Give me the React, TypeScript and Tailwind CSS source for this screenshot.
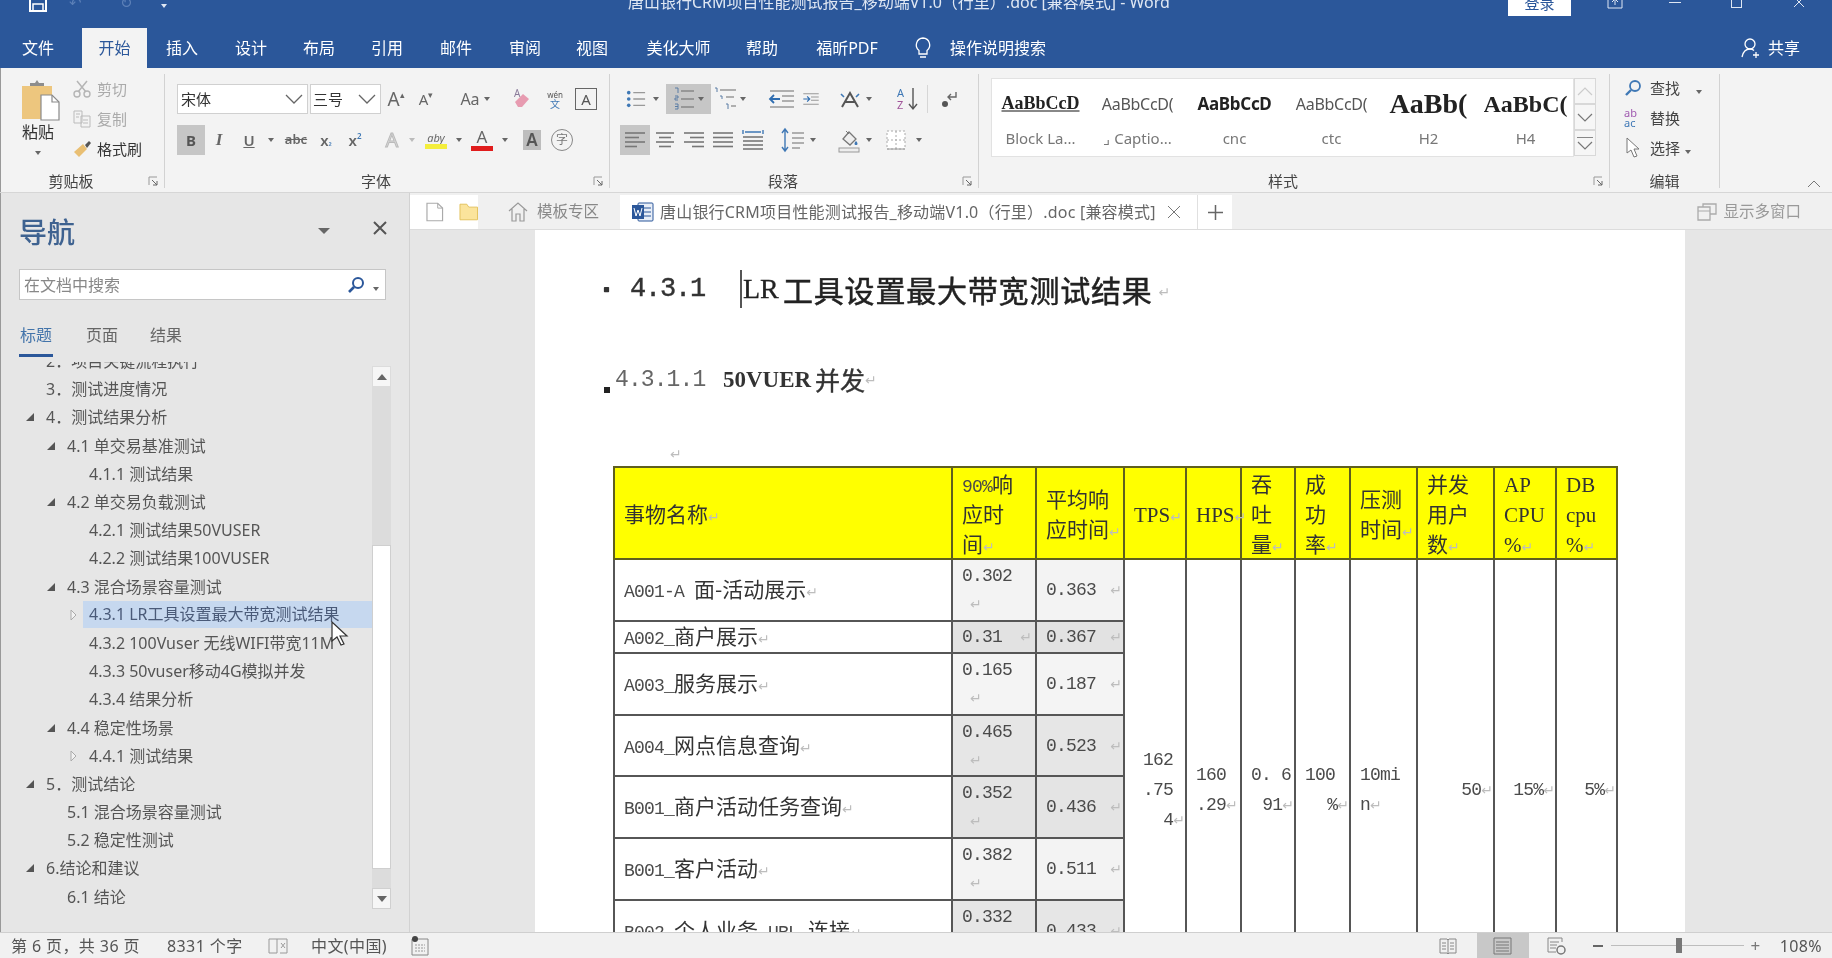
import React from "react";

const Caret = ({ c = "border-t-[#666]" }: { c?: string }) => (
  <span className={`inline-block w-0 h-0 border-x-[3px] border-x-transparent border-t-[4px] ${c}`} />
);
const Sep = () => <span className="w-px h-[28px] bg-[#d6d6d6] shrink-0" />;
const M = () => <span className="font-['DejaVu_Sans'] text-[14px] text-[#bdbdbd] font-normal tracking-normal">↵</span>;
const L = ({ children }: { children: React.ReactNode }) => (
  <span className="font-['Liberation_Mono'] text-[18px] tracking-[-0.8px] text-[#4a4a4a]">{children}</span>
);
const HL = ({ children }: { children: React.ReactNode }) => (
  <span className="font-['Liberation_Serif'] text-[21px] text-[#333]">{children}</span>
);
const Launcher = () => (
  <svg width="11" height="11" viewBox="0 0 11 11" className="shrink-0">
    <path d="M1 9V1h8" fill="none" stroke="#999" />
    <path d="M4 4l5 5M9 5v4H5" fill="none" stroke="#666" />
  </svg>
);
const Group = ({ w, label, launcher = true, children }: { w: string; label: string; launcher?: boolean; children: React.ReactNode }) => (
  <div className={`${w} shrink-0 h-full flex flex-col border-r border-[#d2d2d2]`}>
    <div className="flex-1 min-h-0">{children}</div>
    <div className="h-[14px] flex items-center">
      <div className="flex-1 text-center text-[15px] leading-[14px] text-[#444]">{label}</div>
      {launcher && <div className="w-[22px] flex justify-center"><Launcher /></div>}
    </div>
  </div>
);
const Lines = ({ kind }: { kind: "l" | "c" | "r" | "j" | "d" }) => {
  const rows: Record<string, number[][]> = {
    l: [[2, 22], [2, 16], [2, 22], [2, 14]],
    c: [[3, 21], [6, 18], [3, 21], [6, 18]],
    r: [[2, 22], [8, 22], [2, 22], [10, 22]],
    j: [[2, 22], [2, 22], [2, 22], [2, 22]],
    d: [[2, 22], [2, 22], [2, 22], [2, 22]],
  };
  return (
    <svg width="24" height="22" viewBox="0 0 24 22">
      {kind === "d" && <path d="M2 1v4M22 1v4M4 3h16" stroke="#3f78b5" strokeWidth="1.4" fill="none" />}
      {rows[kind].map((r, i) => (
        <path key={i} d={`M${r[0]} ${(kind === "d" ? 8 : 4) + i * (kind === "d" ? 4 : 4.5)}H${r[1]}`} stroke="#777" strokeWidth="1.6" />
      ))}
    </svg>
  );
};
const Indent = ({ flip }: { flip?: boolean }) => (
  <svg width="28" height="20" viewBox="0 0 28 20">
    <path d="M2 2h24M14 7h12M14 12h12M2 18h24" stroke="#999" strokeWidth="1.6" />
    {flip ? <path d="M2 10h9M8 6l4 4-4 4" stroke="#2f6db0" strokeWidth="1.8" fill="none" /> : <path d="M12 10H3M6 6l-4 4 4 4" stroke="#2f6db0" strokeWidth="1.8" fill="none" />}
  </svg>
);
const Bullets = () => (
  <svg width="22" height="22" viewBox="0 0 22 22">
    <circle cx="3" cy="4" r="2" fill="#3f78b5" /><circle cx="3" cy="11" r="2" fill="#3f78b5" /><circle cx="3" cy="18" r="2" fill="#3f78b5" />
    <path d="M8 4h13M8 11h13M8 18h13" stroke="#999" strokeWidth="1.6" />
  </svg>
);
const Numbered = () => (
  <svg width="22" height="24" viewBox="0 0 22 24">
    <path d="M2 1h3v5M2 9h3v2H2v2h3M2 17h3v5H2M2 19.5h3" stroke="#5a7da5" fill="none" />
    <path d="M8 4h13M8 12h13M8 20h13" stroke="#888" strokeWidth="1.6" />
  </svg>
);
const Multi = () => (
  <svg width="24" height="24" viewBox="0 0 24 24">
    <path d="M1 1h2v4M6 9h2v3M12 17h2v5" stroke="#5a7da5" fill="none" />
    <path d="M6 3h16M12 10h8M17 19h5" stroke="#999" strokeWidth="1.5" />
  </svg>
);

function ClipboardGroup() {
  return (
    <Group w="w-[165px]" label="剪贴板">
      <div className="flex h-full">
        <div className="w-[73px] pl-[20px] flex flex-col">
          <svg width="42" height="42" viewBox="0 0 42 42" className="mt-[6px]">
            <rect x="2" y="6" width="30" height="33" fill="#edc67e" />
            <path d="M10 6V3h5l2-3 2 3h5v3z" fill="#8d8d8d" />
            <path d="M21 15h11l7 7v18H21z" fill="#fff" stroke="#8a8a8a" strokeWidth="1.2" />
            <path d="M32 15v7h7" fill="none" stroke="#8a8a8a" strokeWidth="1.2" />
          </svg>
          <div className="text-[16px] leading-[20px] text-[#333] w-[36px] text-center whitespace-nowrap">粘贴</div>
          <div className="mt-[9px] w-[36px] flex justify-center"><Caret /></div>
        </div>
        <div className="flex flex-col text-[15px]">
          {[["剪切", "#aaa"], ["复制", "#aaa"], ["格式刷", "#333"]].map(([t, c], i) => (
            <div key={t} className="h-[30px] flex items-center">
              <span className="w-[24px] flex justify-start">
                {i === 0 && (
                  <svg width="18" height="18" viewBox="0 0 18 18"><path d="M4 1l9 11M14 1L5 12" stroke="#b5b5b5" strokeWidth="1.5" /><circle cx="4" cy="14" r="3" fill="none" stroke="#b5b5b5" strokeWidth="1.4" /><circle cx="14" cy="14" r="3" fill="none" stroke="#b5b5b5" strokeWidth="1.4" /></svg>
                )}
                {i === 1 && (
                  <svg width="19" height="18" viewBox="0 0 19 18"><path d="M1 1h8v12H1zM8 6h9v11H8z" fill="#f3f3f3" stroke="#bbb" /><path d="M3 4h4M3 7h3M10 10h5M10 13h5" stroke="#bbb" /></svg>
                )}
                {i === 2 && (
                  <svg width="20" height="18" viewBox="0 0 20 18"><path d="M1 12l9-8 4 5-8 8z" fill="#e9bf73" /><path d="M12 5l4-4 2 2-4 5z" fill="#555" /></svg>
                )}
              </span>
              <span style={{ color: c }}>{t}</span>
            </div>
          ))}
        </div>
      </div>
    </Group>
  );
}

function FontGroup() {
  const S = "flex items-center justify-center shrink-0";
  return (
    <Group w="w-[445px]" label="字体">
      <div className="pt-[10px] pl-[12px]">
        <div className="flex items-center h-[30px]">
          <div className="w-[131px] h-[30px] bg-white border border-[#d0d0d0] flex items-center justify-between pl-[3px] pr-[4px] text-[15px] text-[#333]">
            <span>宋体</span>
            <svg width="18" height="10" viewBox="0 0 18 10"><path d="M1 1l8 8 8-8" fill="none" stroke="#666" strokeWidth="1.3" /></svg>
          </div>
          <div className="w-[71px] ml-[2px] h-[30px] bg-white border border-[#d0d0d0] flex items-center justify-between pl-[2px] pr-[4px] text-[15px] text-[#333]">
            <span>三号</span>
            <svg width="18" height="10" viewBox="0 0 18 10"><path d="M1 1l8 8 8-8" fill="none" stroke="#666" strokeWidth="1.3" /></svg>
          </div>
          <span className={`${S} w-[30px] text-[#666] text-[19px]`}>A<sup className="text-[9px]">▴</sup></span>
          <span className={`${S} w-[30px] text-[#666] text-[15px]`}>A<sup className="text-[9px]">▾</sup></span>
          <span className="ml-[7px]"><Sep /></span>
          <span className={`${S} w-[54px] gap-[4px] text-[#666] text-[16px]`}>Aa <Caret /></span>
          <span className="-ml-px"><Sep /></span>
          <span className={`${S} w-[42px]`}>
            <svg width="20" height="22" viewBox="0 0 20 22"><path d="M3 14l8-8 6 5-7 8H6z" fill="#e79bb0" /><text x="2" y="9" fontSize="10" fill="#8a7a9a">A</text></svg>
          </span>
          <span className={`${S} w-[24px] flex-col text-[10px] leading-[10px] text-[#3f78b5]`}><span className="text-[8px] leading-[9px] text-[#555]">wén</span>文</span>
          <span className={`${S} w-[22px] h-[22px] ml-[8px] border border-[#666] text-[#555] text-[15px]`}>A</span>
        </div>
        <div className="flex items-center h-[30px] mt-[11px]">
          <span className={`${S} w-[28px] h-[30px] bg-[#c6c6c6] text-[15px] font-bold text-[#555]`}>B</span>
          <span className={`${S} w-[28px] italic font-['Liberation_Serif'] font-bold text-[17px] text-[#666]`}>I</span>
          <span className={`${S} w-[32px] underline text-[15px] font-semibold text-[#666]`}>U</span>
          <span className={`${S} w-[12px]`}><Caret /></span>
          <span className={`${S} w-[38px] line-through text-[13px] font-semibold text-[#666]`}>abc</span>
          <span className={`${S} w-[22px] text-[15px] font-semibold text-[#666]`}>x<sub className="text-[8px] text-[#3f78b5]">₂</sub></span>
          <span className={`${S} w-[36px] text-[15px] font-semibold text-[#666]`}>x<sup className="text-[8px] text-[#3f78b5]">2</sup></span>
          <span className="ml-[3px]"><Sep /></span>
          <span className={`${S} w-[32px] text-[20px] text-[#dcdcdc] [-webkit-text-stroke:1px_#bbb]`}>A</span>
          <span className={`${S} w-[8px]`}><Caret c="border-t-[#bbb]" /></span>
          <span className={`${S} w-[40px] flex-col`}>
            <span className="text-[11px] leading-[13px] italic text-[#666]">aby</span>
            <span className="w-[22px] h-[5px] bg-[#f4ee3c]" />
          </span>
          <span className={`${S} w-[6px]`}><Caret /></span>
          <span className={`${S} w-[40px] flex-col`}>
            <span className="text-[17px] leading-[15px] text-[#666]">A</span>
            <span className="w-[22px] h-[5px] mt-[2px] bg-[#e01c1c]" />
          </span>
          <span className={`${S} w-[6px]`}><Caret /></span>
          <span className={`${S} w-[18px] h-[20px] ml-[15px] bg-[#bdbdbd] text-[17px] font-semibold text-[#555]`}>A</span>
          <span className={`${S} w-[22px] h-[22px] ml-[10px] rounded-full border border-[#888] text-[12px] text-[#777]`}>字</span>
        </div>
      </div>
    </Group>
  );
}

function ParaGroup() {
  const S = "flex items-center justify-center shrink-0";
  return (
    <Group w="w-[369px]" label="段落">
      <div className="pt-[10px]">
        <div className="flex items-center h-[30px] pl-[16px]">
          <span className={`${S} w-[20px]`}><Bullets /></span>
          <span className={`${S} w-[20px]`}><Caret /></span>
          <span className={`${S} w-[45px] h-[30px] bg-[#c6c6c6] gap-[3px]`}><Numbered /><Caret /></span>
          <span className={`${S} w-[38px] gap-[2px]`}><Multi /><Caret /></span>
          <span className="ml-[13px]"><Sep /></span>
          <span className={`${S} w-[40px]`}><Indent /></span>
          <span className={`${S} w-[18px]`}><Indent flip /></span>
          <span className="ml-[12px]"><Sep /></span>
          <span className={`${S} w-[46px] gap-[4px]`}>
            <svg width="24" height="20" viewBox="0 0 24 20"><path d="M4 18L12 4l8 14M7 13h10" stroke="#555" strokeWidth="2" fill="none" /><path d="M3 5l3 3M21 5l-3 3" stroke="#3f78b5" strokeWidth="1.6" /></svg>
            <Caret />
          </span>
          <span className="ml-[11px]"><Sep /></span>
          <span className={`${S} w-[38px]`}>
            <svg width="26" height="26" viewBox="0 0 26 26"><text x="2" y="11" fontSize="11" fill="#3f78b5">A</text><text x="2" y="23" fontSize="11" fill="#a0559a">Z</text><path d="M18 2v20M14 18l4 5 4-5" stroke="#555" strokeWidth="1.4" fill="none" /></svg>
          </span>
          <Sep />
          <span className={`${S} w-[42px]`}>
            <svg width="18" height="20" viewBox="0 0 18 20"><path d="M16 3v5H8M11 5L8 8l3 3" stroke="#666" strokeWidth="1.4" fill="none" /><circle cx="5" cy="15" r="3" fill="#555" /></svg>
          </span>
        </div>
        <div className="flex items-center h-[30px] mt-[11px] pl-[10px]">
          <span className={`${S} w-[30px] h-[30px] bg-[#c6c6c6]`}><Lines kind="l" /></span>
          <span className={`${S} w-[30px]`}><Lines kind="c" /></span>
          <span className={`${S} w-[28px]`}><Lines kind="r" /></span>
          <span className={`${S} w-[30px]`}><Lines kind="j" /></span>
          <span className={`${S} w-[30px]`}><Lines kind="d" /></span>
          <span className="ml-[5px]"><Sep /></span>
          <span className={`${S} w-[50px] gap-[5px]`}>
            <svg width="24" height="26" viewBox="0 0 24 26"><path d="M4 2v22M1 6l3-4 3 4M1 20l3 4 3-4" stroke="#3f78b5" strokeWidth="1.4" fill="none" /><path d="M11 6h12M11 11h12M11 16h12M11 21h8" stroke="#999" strokeWidth="1.6" /></svg>
            <Caret />
          </span>
          <span className="ml-[7px]"><Sep /></span>
          <span className={`${S} w-[48px] gap-[5px]`}>
            <svg width="24" height="26" viewBox="0 0 24 26"><path d="M6 12l6-7 7 7-6 6z" fill="#eee" stroke="#777" strokeWidth="1.3" /><path d="M9 4l3 3" stroke="#777" /><path d="M19 14c2 2 2 4 0 4s-2-2 0-4z" fill="#3f78b5" /><rect x="2" y="21" width="20" height="4" fill="#eee" stroke="#999" /></svg>
            <Caret />
          </span>
          <span className={`${S} w-[50px] gap-[10px] pl-[2px]`}>
            <svg width="20" height="20" viewBox="0 0 20 20"><path d="M1 1h18v18H1zM10 1v18M1 10h18" fill="#fff" stroke="#aaa" strokeDasharray="2 2" /><path d="M1 19h18" stroke="#999" /></svg>
            <Caret />
          </span>
        </div>
      </div>
    </Group>
  );
}

function StylesGroup() {
  const cells = [
    ["AaBbCcD", "Block La...", "font-['Liberation_Serif'] font-bold underline decoration-2 decoration-[#888] text-[18px] text-[#222]"],
    ["AaBbCcD(", "⌟ Captio...", "font-['Noto_Sans'] text-[16px] text-[#555] tracking-[-0.3px]"],
    ["AaBbCcD", "cnc", "font-['Noto_Sans'] font-bold text-[17px] text-[#222] tracking-[-0.3px]"],
    ["AaBbCcD(", "ctc", "font-['Noto_Sans'] text-[16px] text-[#555] tracking-[-0.3px]"],
    ["AaBb(", "H2", "font-['Liberation_Serif'] font-bold text-[28px] text-[#222]"],
    ["AaBbC(", "H4", "font-['Liberation_Serif'] font-bold text-[24px] text-[#222]"],
  ];
  return (
    <Group w="w-[631px]" label="样式">
      <div className="pt-[4px] pl-[12px] flex">
        <div className="w-[583px] h-[79px] bg-white border border-[#e2e2e2] flex">
          {cells.map(([a, b, c], i) => (
            <div key={i} className="w-[97px] shrink-0 flex flex-col items-center overflow-hidden">
              <div className={`h-[49px] w-[84px] flex items-center justify-center overflow-hidden whitespace-nowrap ${c}`}>{a}</div>
              <div className="text-[15px] leading-[20px] text-[#777] whitespace-nowrap">{b}</div>
            </div>
          ))}
        </div>
        <div className="w-[22px] h-[79px] flex flex-col">
          {[0, 1, 2].map((i) => (
            <div key={i} className="h-[26px] border border-[#d8d8d8] flex flex-col items-center justify-center bg-[#f6f6f6]">
              {i === 2 && <span className="w-[16px] h-px bg-[#888] mb-[3px]" />}
              <svg width="16" height="9" viewBox="0 0 16 9"><path d={i === 0 ? "M1 8l7-7 7 7" : "M1 1l7 7 7-7"} fill="none" stroke={i === 0 ? "#ccc" : "#777"} strokeWidth="1.2" /></svg>
            </div>
          ))}
        </div>
      </div>
    </Group>
  );
}

function EditGroup() {
  return (
    <Group w="w-[110px]" label="编辑" launcher={false}>
      <div className="flex flex-col pl-[14px] text-[15px] text-[#444] -mt-[1px]">
        <div className="h-[30px] flex items-center gap-[2px]">
          <svg width="18" height="18" viewBox="0 0 18 18"><circle cx="11" cy="7" r="5" fill="none" stroke="#3f78b5" strokeWidth="1.8" /><path d="M7 11l-5 5" stroke="#3f78b5" strokeWidth="2.4" /></svg>
          <span className="ml-[6px] w-[34px]">查找</span><span className="ml-[10px]"><Caret /></span>
        </div>
        <div className="h-[30px] flex items-center gap-[2px]">
          <span className="w-[20px] text-[11px] leading-[10px] text-[#a05ab0]">ab<br /><span className="text-[#3f78b5]">ac</span></span>
          <span className="ml-[4px]">替换</span>
        </div>
        <div className="h-[30px] flex items-center gap-[2px]">
          <svg width="18" height="22" viewBox="0 0 18 22"><path d="M3 1v15l4-3 3 7 3-1-3-7h5z" fill="#fff" stroke="#777" /></svg>
          <span className="ml-[6px]">选择</span><span className="ml-[3px]"><Caret /></span>
        </div>
      </div>
    </Group>
  );
}

const tabs: [string, string][] = [
  ["插入", "w-[70px]"], ["设计", "w-[68px]"], ["布局", "w-[68px]"], ["引用", "w-[68px]"], ["邮件", "w-[70px]"],
  ["审阅", "w-[68px]"], ["视图", "w-[66px]"], ["美化大师", "w-[107px]"], ["帮助", "w-[60px]"], ["福昕PDF", "w-[110px]"],
];

function Header() {
  return (
    <div className="h-[68px] bg-[#2b579a] overflow-hidden shrink-0 text-white">
      <div className="h-[38px] -mt-[10px] flex items-start">
        <div className="w-[628px] h-[24px] flex items-center shrink-0">
          <svg width="18" height="20" viewBox="0 0 18 20" className="ml-[29px]"><path d="M1 1h13l3 3v15H1z" fill="none" stroke="#fff" strokeWidth="2" /><path d="M4 1h9v6H4zM4 12h10v7H4z" fill="none" stroke="#fff" strokeWidth="1.5" /></svg>
          <span className="ml-[22px] text-[#5b7fb7] text-[15px]">↶</span>
          <span className="ml-[38px] text-[#5b7fb7] text-[15px]">↻</span>
          <span className="ml-[28px]"><Caret c="border-t-[#dfe7f3]" /></span>
        </div>
        <div className="w-[880px] h-[24px] text-[16px] leading-[24px] whitespace-nowrap text-[#dfe7f3] shrink-0">唐山银行CRM项目性能测试报告_移动端V1.0（行里）.doc [兼容模式] - Word</div>
        <div className="w-[63px] h-[26px] bg-white text-[#2b579a] text-[15px] flex items-center justify-center shrink-0">登录</div>
        <div className="flex h-[24px] items-center">
          <svg width="16" height="14" viewBox="0 0 16 14" className="ml-[36px]"><path d="M1 1h14v12H1zM8 10V4M5 7l3-3 3 3" fill="none" stroke="#dfe7f3" /></svg>
          <span className="ml-[46px] w-[12px] h-px bg-[#dfe7f3]" />
          <span className="ml-[50px] w-[11px] h-[11px] border border-[#dfe7f3]" />
          <svg width="12" height="12" viewBox="0 0 12 12" className="ml-[51px]"><path d="M1 1l10 10M11 1L1 11" stroke="#dfe7f3" /></svg>
        </div>
      </div>
      <div className="h-[40px] flex items-center text-[16px]">
        <div className="w-[82px] text-center pr-[6px]">文件</div>
        <div className="w-[65px] h-[40px] bg-[#f3f3f3] text-[#2b579a] flex items-center justify-center">开始</div>
        {tabs.map(([t, w]) => (
          <div key={t} className={`${w} text-center whitespace-nowrap`}>{t}</div>
        ))}
        <svg width="18" height="24" viewBox="0 0 18 24" className="ml-[12px]"><path d="M9 2a7 7 0 0 0-4 12.5V18h8v-3.500A7 7 0 0 0 9 2zM6 21h6" fill="none" stroke="#fff" strokeWidth="1.3" /></svg>
        <span className="ml-[18px]">操作说明搜索</span>
        <svg width="20" height="24" viewBox="0 0 20 24" className="ml-auto"><circle cx="10" cy="8" r="5" fill="none" stroke="#fff" strokeWidth="1.3" /><path d="M2 21c1-5 4-8 8-8 2 0 3 .5 4 1.500M13 19h6M16 16v6" fill="none" stroke="#fff" strokeWidth="1.3" /></svg>
        <span className="ml-[8px] mr-[32px]">共享</span>
      </div>
    </div>
  );
}

function Ribbon() {
  return (
    <div className="h-[125px] shrink-0 bg-[#f3f3f3] border-b border-[#d6d6d6] flex pt-[6px] pb-[4px] shadow-[inset_1px_0_0_#999]">
      <ClipboardGroup />
      <FontGroup />
      <ParaGroup />
      <StylesGroup />
      <EditGroup />
      <div className="flex-1 flex justify-end items-end pr-[11px]">
        <svg width="14" height="8" viewBox="0 0 14 8"><path d="M1 7l6-6 6 6" fill="none" stroke="#777" /></svg>
      </div>
    </div>
  );
}

const Arrow = ({ open }: { open?: boolean }) =>
  open ? (
    <svg width="12" height="10" viewBox="0 0 12 10" className="shrink-0"><path d="M2 9h8V1z" fill="#555" /></svg>
  ) : (
    <svg width="12" height="12" viewBox="0 0 12 12" className="shrink-0"><path d="M4 1l5 5-5 5z" fill="#f2f2f2" stroke="#aaa" /></svg>
  );

const tree: { t: string; l: string; a?: "o" | "c"; sel?: boolean }[] = [
  { t: "2．项目关键流程执行", l: "pl-[24px]" },
  { t: "3．测试进度情况", l: "pl-[24px]" },
  { t: "4．测试结果分析", l: "pl-[24px]", a: "o" },
  { t: "4.1 单交易基准测试", l: "pl-[45px]", a: "o" },
  { t: "4.1.1 测试结果", l: "pl-[67px]" },
  { t: "4.2 单交易负载测试", l: "pl-[45px]", a: "o" },
  { t: "4.2.1 测试结果50VUSER", l: "pl-[67px]" },
  { t: "4.2.2 测试结果100VUSER", l: "pl-[67px]" },
  { t: "4.3 混合场景容量测试", l: "pl-[45px]", a: "o" },
  { t: "4.3.1 LR工具设置最大带宽测试结果", l: "pl-[67px]", a: "c", sel: true },
  { t: "4.3.2 100Vuser 无线WIFI带宽11M", l: "pl-[67px]" },
  { t: "4.3.3 50vuser移动4G模拟并发", l: "pl-[67px]" },
  { t: "4.3.4 结果分析", l: "pl-[67px]" },
  { t: "4.4 稳定性场景", l: "pl-[45px]", a: "o" },
  { t: "4.4.1 测试结果", l: "pl-[67px]", a: "c" },
  { t: "5．测试结论", l: "pl-[24px]", a: "o" },
  { t: "5.1 混合场景容量测试", l: "pl-[45px]" },
  { t: "5.2 稳定性测试", l: "pl-[45px]" },
  { t: "6.结论和建议", l: "pl-[24px]", a: "o" },
  { t: "6.1 结论", l: "pl-[45px]" },
];

function Nav() {
  return (
    <div className="relative w-[410px] h-full shrink-0 bg-[#e6e6e6] border-r border-[#d2d2d2] flex flex-col shadow-[inset_1px_0_0_#999]">
      <div className="h-[76px] shrink-0 flex items-center pl-[19px] pt-[2px]">
        <span className="text-[28px] leading-[34px] text-[#3e6290] font-medium">导航</span>
        <span className="ml-[243px] -mt-[8px]"><Caret c="border-t-[#666] border-t-[6px] border-x-[6px]" /></span>
        <svg width="14" height="14" viewBox="0 0 14 14" className="ml-[43px] -mt-[8px]"><path d="M1 1l12 12M13 1L1 13" stroke="#555" strokeWidth="2" /></svg>
      </div>
      <div className="ml-[19px] w-[367px] h-[31px] shrink-0 bg-white border border-[#c6c6c6] flex items-center pl-[4px] text-[16px] text-[#888]">
        <span className="flex-1">在文档中搜索</span>
        <svg width="18" height="18" viewBox="0 0 18 18"><circle cx="11" cy="7" r="5" fill="none" stroke="#2b579a" strokeWidth="2" /><path d="M7 11l-5 5" stroke="#2b579a" strokeWidth="2.6" /></svg>
        <span className="ml-[8px] mr-[6px]"><Caret /></span>
      </div>
      <div className="flex h-[57px] shrink-0 pl-[19px] text-[16px] text-[#666]">
        <div className="w-[34px] h-[57px] border-b-[3px] border-[#2b579a] text-[#4374aa] flex items-start justify-center pt-[24px] leading-[22px]">标题</div>
        <div className="ml-[33px] pt-[24px] leading-[22px]">页面</div>
        <div className="ml-[32px] pt-[24px] leading-[22px]">结果</div>
      </div>
      <div className="flex flex-1 min-h-0 mt-[5px]">
        <div className="w-[372px] h-[546px] overflow-hidden shrink-0">
          <div className="-mt-[15px]">
            {tree.map((r) => (
              <div key={r.t} className={`h-[28.2px] flex items-center text-[16px] text-[#555] whitespace-nowrap ${r.l}`}>
                {r.sel ? (
                  <>
                    <span className="w-[16px]"><Arrow /></span>
                    <span className="flex-1 h-[27px] bg-[#c6d8ef] pl-[6px] leading-[27px] text-[#4a5a78]">{r.t}</span>
                  </>
                ) : (
                  <>
                    <span className="w-[22px] shrink-0">{r.a && <Arrow open={r.a === "o"} />}</span>
                    <span>{r.t}</span>
                  </>
                )}
              </div>
            ))}
          </div>
        </div>
        <div className="w-[19px] h-[543px] mt-[4px] flex flex-col bg-[#dcdcdc]">
          <div className="h-[21px] bg-[#f6f6f6] border border-[#dcdcdc] flex items-center justify-center">
            <svg width="10" height="6" viewBox="0 0 10 6"><path d="M5 0l5 6H0z" fill="#666" /></svg>
          </div>
          <div className="h-[158px]" />
          <div className="h-[324px] bg-white border border-[#cfcfcf]" />
          <div className="flex-1" />
          <div className="h-[21px] bg-[#f6f6f6] border border-[#d0d0d0] flex items-center justify-center">
            <svg width="10" height="6" viewBox="0 0 10 6"><path d="M5 6L10 0H0z" fill="#666" /></svg>
          </div>
        </div>
      </div>
      <svg width="22" height="26" viewBox="0 0 22 26" className="absolute left-[330px] top-[428px]"><path d="M2 1v19l5-4 4 8 3-1-4-8h7z" fill="#fff" stroke="#333" strokeWidth="1.2" /></svg>
    </div>
  );
}

function TabStrip() {
  return (
    <div className="h-[37px] shrink-0 bg-[#f0f0f0] border-b border-[#dcdcdc] flex pt-[2px] text-[16px]">
      <div className="w-[68px] bg-white flex items-center pl-[16px] gap-[15px]">
        <svg width="18" height="20" viewBox="0 0 18 20"><path d="M1 1h11l5 5v13H1z" fill="#fff" stroke="#aaa" strokeWidth="1.2" /><path d="M12 1v5h5" fill="none" stroke="#aaa" /></svg>
        <svg width="20" height="18" viewBox="0 0 20 18"><path d="M1 1h7l2 3h9v13H1z" fill="#fbe49c" stroke="#e3c25e" /></svg>
      </div>
      <div className="w-[16px]" />
      <div className="w-[126px] flex items-center gap-[9px] pl-[14px] text-[#888]">
        <svg width="20" height="20" viewBox="0 0 20 20"><path d="M1 9l9-8 9 8M4 7v12h4v-7h4v7h4V7" fill="none" stroke="#999" strokeWidth="1.2" /></svg>
        <span className="text-[15.5px] whitespace-nowrap">模板专区</span>
      </div>
      <div className="w-[577px] bg-white flex items-center pl-[12px] text-[#666] whitespace-nowrap">
        <svg width="22" height="20" viewBox="0 0 22 20"><rect x="6" y="1" width="15" height="18" rx="1" fill="#e8eef7" stroke="#2b579a" /><path d="M11 6h8M11 10h8M11 14h8" stroke="#2b579a" /><rect x="0" y="3" width="12" height="14" fill="#2b579a" /><path d="M2 6l2 8 2-6 2 6 2-8" stroke="#fff" fill="none" /></svg>
        <span className="ml-[6px] w-[498px] overflow-hidden tracking-[0.2px]">唐山银行CRM项目性能测试报告_移动端V1.0（行里）.doc [兼容模式]</span>
        <svg width="14" height="14" viewBox="0 0 14 14" className="ml-[9px]"><path d="M1 1l12 12M13 1L1 13" stroke="#777" /></svg>
      </div>
      <div className="w-[35px] bg-white border-l border-[#e0e0e0] flex items-center justify-center">
        <svg width="15" height="15" viewBox="0 0 15 15"><path d="M7.500 0v15M0 7.500h15" stroke="#666" strokeWidth="1.5" /></svg>
      </div>
      <div className="flex-1 flex items-center justify-end pr-[31px] text-[#999] gap-[6px] text-[15.5px]">
        <svg width="20" height="18" viewBox="0 0 20 18"><path d="M6 4V1h13v10h-6M1 4h12v13H1z" fill="none" stroke="#aaa" strokeWidth="1.3" /><path d="M1 8h12" stroke="#aaa" /></svg>
        <span>显示多窗口</span>
      </div>
    </div>
  );
}

const H = ({ children }: { children: React.ReactNode }) => <div className="whitespace-nowrap h-[30px] leading-[30px]">{children}</div>;
const dataRows: { n: React.ReactNode; a: string; b: string; ca: string; cb: string; h: string; two: boolean }[] = [
  { n: <><L>A001-A </L>面-活动展示</>, a: "0.302", b: "0.363", ca: "bg-[#f3f3f3]", cb: "bg-[#f3f3f3]", h: "h-[62px]", two: true },
  { n: <><L>A002_</L>商户展示</>, a: "0.31", b: "0.367", ca: "bg-[#e2e2e2]", cb: "bg-[#e2e2e2]", h: "h-[31px]", two: false },
  { n: <><L>A003_</L>服务展示</>, a: "0.165", b: "0.187", ca: "bg-[#f4f4f4]", cb: "bg-[#f4f4f4]", h: "h-[62px]", two: true },
  { n: <><L>A004_</L>网点信息查询</>, a: "0.465", b: "0.523", ca: "bg-[#e6e6e6]", cb: "bg-[#e6e6e6]", h: "h-[61px]", two: true },
  { n: <><L>B001_</L>商户活动任务查询</>, a: "0.352", b: "0.436", ca: "bg-[#e4e4e4]", cb: "bg-[#e4e4e4]", h: "h-[62px]", two: true },
  { n: <><L>B001_</L>客户活动</>, a: "0.382", b: "0.511", ca: "bg-[#f3f3f3]", cb: "bg-[#f3f3f3]", h: "h-[62px]", two: true },
  { n: <><L>B002_</L>个人业务<L> URL </L>连接</>, a: "0.332", b: "0.433", ca: "bg-[#e6e6e6]", cb: "bg-[#e6e6e6]", h: "h-[62px]", two: true },
];

function ResultTable() {
  const th = "border-2 border-[#5f5f1e] bg-[#ffff00] p-0 pl-[9px] text-left align-middle font-normal text-[21px] text-[#333]";
  const td = "border-2 border-[#565656] p-0";
  const mer = `${td} align-middle pl-[9px]`;
  const R = ({ children }: { children: React.ReactNode }) => <div className="text-right whitespace-nowrap h-[30px] leading-[30px]">{children}</div>;
  return (
    <table className="table-fixed border-collapse w-[1003px] text-[21px] text-[#333]">
      <colgroup>
        <col className="w-[338px]" /><col className="w-[84px]" /><col className="w-[88px]" /><col className="w-[62px]" /><col className="w-[55px]" /><col className="w-[54px]" />
        <col className="w-[55px]" /><col className="w-[67px]" /><col className="w-[77px]" /><col className="w-[62px]" /><col className="w-[61px]" />
      </colgroup>
      <thead>
        <tr className="h-[92px]">
          <th className={th}><H>事物名称<M /></H></th>
          <th className={`${th} text-[19px]`}><H><L>90%</L>响</H><H>应时</H><H>间<M /></H></th>
          <th className={th}><H>平均响</H><H>应时间<M /></H></th>
          <th className={th}><H><HL>TPS</HL><M /></H></th>
          <th className={th}><H><HL>HPS</HL><M /></H></th>
          <th className={th}><H>吞</H><H>吐</H><H>量<M /></H></th>
          <th className={th}><H>成</H><H>功</H><H>率<M /></H></th>
          <th className={th}><H>压测</H><H>时间<M /></H></th>
          <th className={th}><H>并发</H><H>用户</H><H>数<M /></H></th>
          <th className={th}><H><HL>AP</HL></H><H><HL>CPU</HL></H><H><HL>%</HL><M /></H></th>
          <th className={th}><H><HL>DB</HL></H><H><HL>cpu</HL></H><H><HL>%</HL><M /></H></th>
        </tr>
      </thead>
      <tbody>
        {dataRows.map((r, i) => (
          <tr key={i} className={r.h}>
            <td className={`${td} pl-[9px] whitespace-nowrap leading-[26px]`}>{r.n}<M /></td>
            <td className={`${td} ${r.ca} pl-[9px] leading-[26px] ${r.two ? "align-top" : ""}`}>
              {r.two ? (
                <div className="-mt-[2px]">
                  <div className="h-[28px] leading-[28px] whitespace-nowrap"><L>{r.a}</L></div>
                  <div className="h-[28px] leading-[28px] ml-[8px]"><M /></div>
                </div>
              ) : (
                <div className="flex justify-between items-center pr-[3px] h-[26px]"><L>{r.a}</L><M /></div>
              )}
            </td>
            <td className={`${td} ${r.cb} pl-[9px] leading-[26px]`}>
              <div className="flex justify-between items-center pr-[1px] h-[26px]"><L>{r.b}</L><M /></div>
            </td>
            {i === 0 && (
              <>
                <td rowSpan={8} className={`${td} align-middle pl-[18px]`}><H><L>162</L></H><H><L>.75</L></H><R><L>4</L><M /></R></td>
                <td rowSpan={8} className={mer}><H><L>160</L></H><H><L>.29</L><M /></H></td>
                <td rowSpan={8} className={mer}><H><L>0. 6</L></H><R><L>91</L><M /></R></td>
                <td rowSpan={8} className={mer}><H><L>100</L></H><R><L>%</L><M /></R></td>
                <td rowSpan={8} className={mer}><H><L>10mi</L></H><H><L>n</L><M /></H></td>
                <td rowSpan={8} className={mer}><R><L>50</L><M /></R></td>
                <td rowSpan={8} className={mer}><R><L>15%</L><M /></R></td>
                <td rowSpan={8} className={mer}><R><L>5%</L><M /></R></td>
              </>
            )}
          </tr>
        ))}
        <tr className="h-[51px]">
          <td className={td} /><td className={td} /><td className={td} />
        </tr>
      </tbody>
    </table>
  );
}

function Doc() {
  return (
    <div className="flex-1 min-h-0 overflow-hidden bg-[#e6e6e6] pl-[125px]">
      <div className="w-[1150px] h-full bg-white overflow-hidden pt-[38px] font-['Noto_Sans_CJK_SC',sans-serif]">
        <div className="h-[42px] flex items-center pl-[68px] text-[#222]">
          <span className="w-[7px] h-[7px] bg-[#333] rounded-[1px] mr-[20px] scale-75" />
          <span className="font-['Liberation_Mono'] text-[27px] tracking-[-1.2px] text-[#333] w-[110px] [-webkit-text-stroke:0.4px_#333]">4.3.1</span>
          <span className="w-[2px] h-[38px] bg-[#555]" />
          <span className="font-['Liberation_Serif'] text-[28px] w-[40px] ml-[1px] [-webkit-text-stroke:0.3px_#222]">LR</span>
          <span className="text-[30px] tracking-[0.8px] [-webkit-text-stroke:0.5px_#222]">工具设置最大带宽测试结果</span>
          <span className="text-[18px] ml-[6px]"><M /></span>
        </div>
        <div className="h-[36px] mt-[52px] flex items-center pl-[69px]">
          <span className="w-[6px] h-[6px] bg-[#222] mt-[20px] mr-[5px]" />
          <span className="font-['Liberation_Mono'] text-[23px] tracking-[-0.9px] text-[#666] w-[108px] whitespace-nowrap">4.3.1.1</span>
          <span className="font-['Liberation_Serif'] font-bold text-[23px] text-[#333] w-[92px] whitespace-nowrap">50VUER</span>
          <span className="text-[25px] text-[#333] [-webkit-text-stroke:0.4px_#333]">并发</span>
          <M />
        </div>
        <div className="h-[20px] mt-[44px] pl-[135px] leading-[20px]"><M /></div>
        <div className="mt-[4px] pl-[78px]"><ResultTable /></div>
      </div>
    </div>
  );
}

function StatusBar() {
  return (
    <div className="h-[26px] shrink-0 bg-[#f1f1f1] border-t border-[#cfcfcf] flex items-center text-[16px] tracking-[0.4px] text-[#555] whitespace-nowrap">
      <span className="ml-[11px] w-[156px]">第 6 页，共 36 页</span>
      <span className="w-[101px]">8331 个字</span>
      <svg width="20" height="18" viewBox="0 0 20 18" className="mr-[23px]"><path d="M1 2h8v14H1zM9 2h10v14h-7" fill="none" stroke="#999" /><path d="M13 6l4 5M17 6l-4 5" stroke="#999" /></svg>
      <span className="w-[100px]">中文(中国)</span>
      <svg width="18" height="20" viewBox="0 0 18 20"><path d="M1 3h16v16H1z" fill="#f1f1f1" stroke="#888" /><circle cx="4" cy="3" r="3" fill="#444" /><path d="M4 9h10M4 12h10M4 15h10" stroke="#999" strokeDasharray="2 1" /></svg>
      <div className="ml-auto flex items-center h-full">
        <svg width="18" height="18" viewBox="0 0 18 18" className="mr-[20px]"><path d="M1 2h7l1 1 1-1h7v14h-7l-1 1-1-1H1zM9 3v13M3 6h4M3 9h4M3 12h4M11 6h4M11 9h4M11 12h4" fill="none" stroke="#888" /></svg>
        <div className="w-[52px] h-full bg-[#c8c8c8] flex items-center justify-center">
          <svg width="19" height="18" viewBox="0 0 19 18"><path d="M1 1h17v16H1zM3 5h13M3 8h13M3 11h13M3 14h13" fill="none" stroke="#777" /></svg>
        </div>
        <svg width="20" height="18" viewBox="0 0 20 18" className="ml-[18px]"><path d="M1 1h14v4M1 1v14h8M3 5h9M3 8h7M3 11h6" fill="none" stroke="#888" /><circle cx="14" cy="13" r="4" fill="none" stroke="#777" strokeWidth="1.5" /></svg>
        <span className="ml-[26px] w-[10px] h-[2px] bg-[#666]" />
        <div className="ml-[8px] w-[133px] h-px bg-[#bdbdbd] flex items-center pl-[65px]">
          <span className="w-[6px] h-[15px] bg-[#777] shrink-0" />
        </div>
        <span className="ml-[7px] text-[#777] text-[17px]">+</span>
        <span className="ml-[19px] mr-[10px]">108%</span>
      </div>
    </div>
  );
}

export default function App() {
  return (
    <div className="w-[1832px] h-[958px] overflow-hidden flex flex-col bg-[#e6e6e6] blur-[0.5px] font-['Noto_Sans','Noto_Sans_CJK_SC',sans-serif]">
      <Header />
      <Ribbon />
      <div className="flex-1 min-h-0 flex">
        <Nav />
        <div className="flex-1 min-w-0 flex flex-col">
          <TabStrip />
          <Doc />
        </div>
      </div>
      <StatusBar />
    </div>
  );
}
